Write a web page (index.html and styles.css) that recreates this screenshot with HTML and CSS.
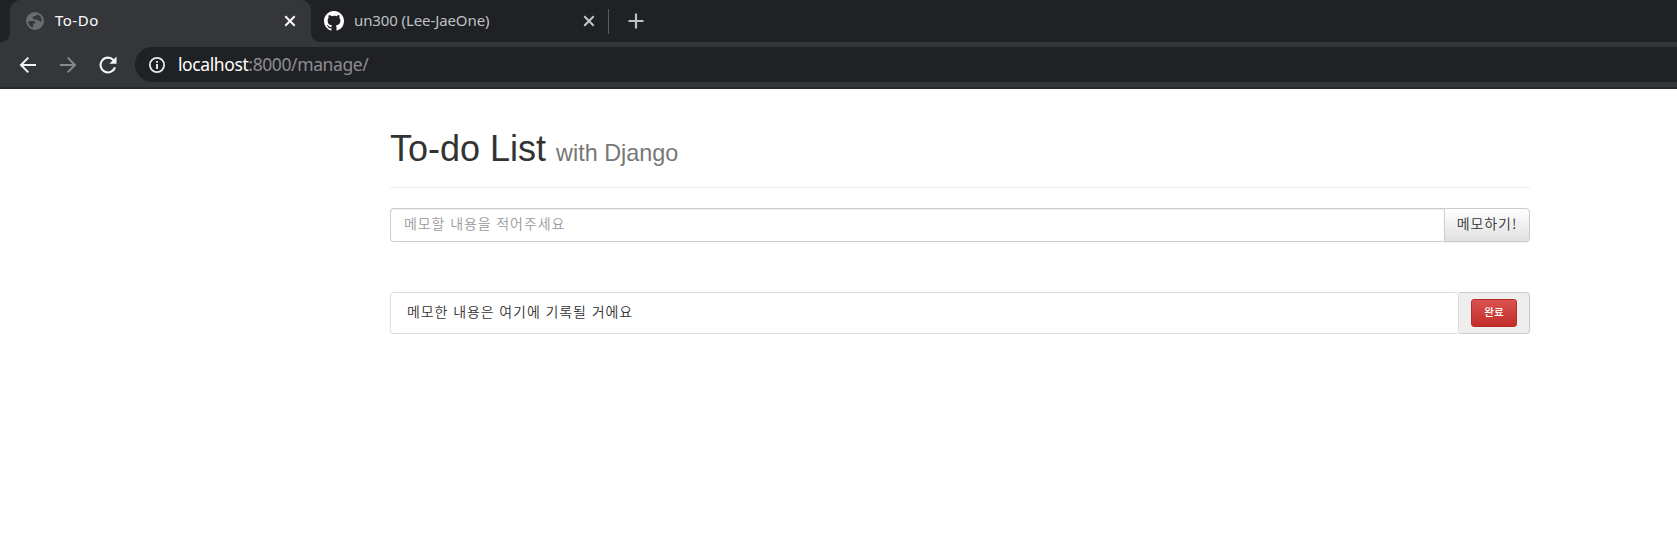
FILE: index.html
```html
<!DOCTYPE html>
<html lang="ko">
<head>
<meta charset="utf-8">
<title>To-Do</title>
<link rel="stylesheet" href="styles.css">
</head>
<body>
<header class="browser">
  <div class="tabstrip">
    <div class="edge"></div>
    <div class="active-slot">
      <div class="tab active">
        <svg class="globe" width="18" height="18" viewBox="0 0 18 18"><circle cx="9" cy="9" r="9" fill="#696c70"/><path d="M2.2 9H7.4Q9.6 9.3 9.4 11.6H7.2V15.6Q2.2 14.4 2.2 9ZM10.8 2.3Q15.8 4 15.9 9Q14.7 9.7 13.6 9.2Q12.2 7.2 9.6 7.4Q6.6 7.2 6.6 5.5Q6.9 3.9 9 4.3Q10.6 4.1 10.8 2.3Z" fill="#35363a"/></svg>
        <span class="tab-title">To-Do</span>
        <svg class="close" width="12" height="12" viewBox="0 0 12 12"><path d="M1.3 1.3 10.7 10.7M10.7 1.3 1.3 10.7" stroke="#fff" stroke-width="2"/></svg>
      </div>
    </div>
    <div class="inactive-area">
      <div class="tab second">
        <svg class="github" width="20" height="20" viewBox="0 0 16 16"><path fill="#fff" d="M8 0C3.58 0 0 3.58 0 8c0 3.54 2.29 6.53 5.47 7.59.4.07.55-.17.55-.38 0-.19-.01-.82-.01-1.49-2.01.37-2.53-.49-2.69-.94-.09-.23-.48-.94-.82-1.13-.28-.15-.68-.52-.01-.53.63-.01 1.08.58 1.23.82.72 1.21 1.87.87 2.33.66.07-.52.28-.87.51-1.07-1.78-.2-3.64-.89-3.64-3.95 0-.87.31-1.59.82-2.15-.08-.2-.36-1.02.08-2.12 0 0 .67-.21 2.2.82A7.6 7.6 0 0 1 8 3.86c.68 0 1.36.09 2 .27 1.53-1.04 2.2-.82 2.2-.82.44 1.1.16 1.92.08 2.12.51.56.82 1.27.82 2.15 0 3.07-1.87 3.75-3.65 3.95.29.25.54.73.54 1.48 0 1.07-.01 1.93-.01 2.2 0 .21.15.46.55.38A8.01 8.01 0 0 0 16 8c0-4.42-3.58-8-8-8z"/></svg>
        <span class="tab-title">un300 (Lee-JaeOne)</span>
        <svg class="close" width="12" height="12" viewBox="0 0 12 12"><path d="M1.3 1.3 10.7 10.7M10.7 1.3 1.3 10.7" stroke="#c4c7cb" stroke-width="2"/></svg>
      </div>
      <span class="separator"></span>
      <svg class="new-tab" width="16" height="16" viewBox="0 0 16 16"><path d="M8 .5V15.500M.5 8H15.500" stroke="#bfc2c5" stroke-width="2.2"/></svg>
    </div>
  </div>
  <div class="toolbar">
    <svg class="nav" width="18" height="18" viewBox="0 0 18 18"><path d="M17 9H2.500M9.300 1.600 2 9 9.300 16.400" fill="none" stroke="#f1f3f4" stroke-width="2"/></svg>
    <svg class="nav" width="18" height="18" viewBox="0 0 18 18"><path d="M1 9H15.500M8.700 1.600 16 9 8.700 16.400" fill="none" stroke="#87888b" stroke-width="2"/></svg>
    <svg class="reload" width="18" height="18" viewBox="0 0 18 18"><path d="M16 11.300A7.400 7.400 0 1 1 14.600 4.200" fill="none" stroke="#f1f3f4" stroke-width="2.100"/><path d="M17.500 .6V7.700H10.400Z" fill="#f1f3f4"/></svg>
    <div class="address">
      <svg width="16" height="16" viewBox="0 0 16 16"><circle cx="8" cy="8" r="7.100" fill="none" stroke="#e8eaed" stroke-width="1.800"/><path d="M8 7V12M8 3.900V5.800" stroke="#e8eaed" stroke-width="1.900"/></svg>
      <span class="url"><span class="host">localhost</span>:8000/manage/</span>
    </div>
  </div>
</header>
<main class="container">
  <div class="page-header"><h1>To-do List <small>with Django</small></h1></div>
  <form class="memo-form">
    <input class="memo-input" type="text" placeholder="메모할 내용을 적어주세요">
    <button class="memo-button" type="button">메모하기!</button>
  </form>
  <div class="memo-row">
    <div class="memo-text">메모한 내용은 여기에 기록될 거에요</div>
    <div class="memo-action"><button class="done" type="button">완료</button></div>
  </div>
</main>
</body>
</html>
```
FILE: styles.css
```css
* { box-sizing: border-box; }
body {
  margin: 0;
  background: #fff;
  color: #333;
  font: 14px/20px "Liberation Sans", "Noto Sans CJK KR", sans-serif;
}
svg { display: block; flex: none; }

.browser {
  height: 89px;
  background: #35363a;
  border-bottom: 2px solid #28292c;
  font-family: "Noto Sans", "Noto Sans CJK KR", sans-serif;
}
.tabstrip { display: flex; height: 42px; }
.edge { width: 10px; background: #202124; border-bottom-right-radius: 9px; }
.active-slot { width: 301px; background: linear-gradient(#202124 20px, #35363a 20px); }
.inactive-area {
  display: flex;
  align-items: center;
  flex: 1;
  background: #202124;
  border-bottom-left-radius: 9px;
}
.tab { display: flex; align-items: center; height: 42px; }
.active {
  padding: 0 15px 0 16px;
  background: #35363a;
  border-radius: 10px 10px 0 0;
  color: #fff;
}
.second { width: 297px; padding: 0 13px; color: #bdc1c6; }
.separator { width: 1px; height: 25px; background: #5b5c60; }
.new-tab { margin-left: 19px; }
.tab-title {
  flex: 1;
  padding-bottom: 2px;
  font-size: 15px;
  white-space: nowrap;
}
.active .tab-title { letter-spacing: .5px; }
.second .tab-title { letter-spacing: -.1px; }
.globe { margin-right: 11px; }
.github { margin-right: 10px; }

.toolbar { display: flex; align-items: center; height: 45px; padding-left: 19px; }
.nav { margin-right: 22px; }
.reload { margin-right: 18px; }
.address {
  display: flex;
  align-items: center;
  flex: 1;
  height: 35px;
  padding-left: 14px;
  background: #202124;
  border-radius: 18px 0 0 18px;
}
.url {
  margin-left: 13px;
  padding-bottom: 2px;
  color: #8c8e91;
  font-size: 17.500px;
  letter-spacing: -.4px;
  white-space: nowrap;
}
.host { color: #fff; }

.container { width: 1140px; margin-left: 390px; }
.page-header { margin: 40px 0 20px; padding-bottom: 9px; border-bottom: 1px solid #eee; }
h1 { margin: 0 0 10px; font-size: 36px; font-weight: 400; line-height: 39px; }
h1 small { color: #777; font-size: 23.400px; line-height: 1; }

.memo-form { display: flex; height: 34px; }
.memo-input, .memo-button, .memo-text {
  font: 350 14px/18px "Noto Sans CJK KR", sans-serif;
  letter-spacing: .9px;
}
.memo-input {
  flex: 1;
  padding: 3px 12px 7px 13px;
  border: 1px solid #ccc;
  border-right: 0;
  border-radius: 4px 0 0 4px;
  box-shadow: inset 0 1px 1px rgba(0, 0, 0, .075);
}
.memo-input::placeholder { color: #999; }
.memo-button {
  width: 86px;
  padding: 0 0 4px;
  border: 1px solid #ccc;
  border-radius: 0 4px 4px 0;
  background: linear-gradient(#fff, #e0e0e0);
  box-shadow: inset 0 1px 0 rgba(255, 255, 255, .15), 0 1px 1px rgba(0, 0, 0, .075);
  color: #333;
}
.memo-row {
  display: flex;
  height: 42px;
  margin-top: 50px;
  border-radius: 4px;
  box-shadow: 0 1px 2px rgba(0, 0, 0, .075);
}
.memo-text {
  flex: 1;
  padding: 9px 15px 10px 16px;
  border: 1px solid #ddd;
  border-radius: 4px;
}
.memo-action {
  display: flex;
  align-items: center;
  width: 71px;
  padding-left: 12px;
  border: 1px solid #ccc;
  border-left: 0;
  border-radius: 0 4px 4px 0;
  background: #eee;
}
.done {
  width: 46px;
  height: 28px;
  padding: 0 0 3px;
  border: 1px solid #b92c28;
  border-radius: 3px;
  background: linear-gradient(#d9534f, #c12e2a);
  color: #fff;
  font: 500 10.500px/14px "Noto Sans CJK KR", sans-serif;
}
```
